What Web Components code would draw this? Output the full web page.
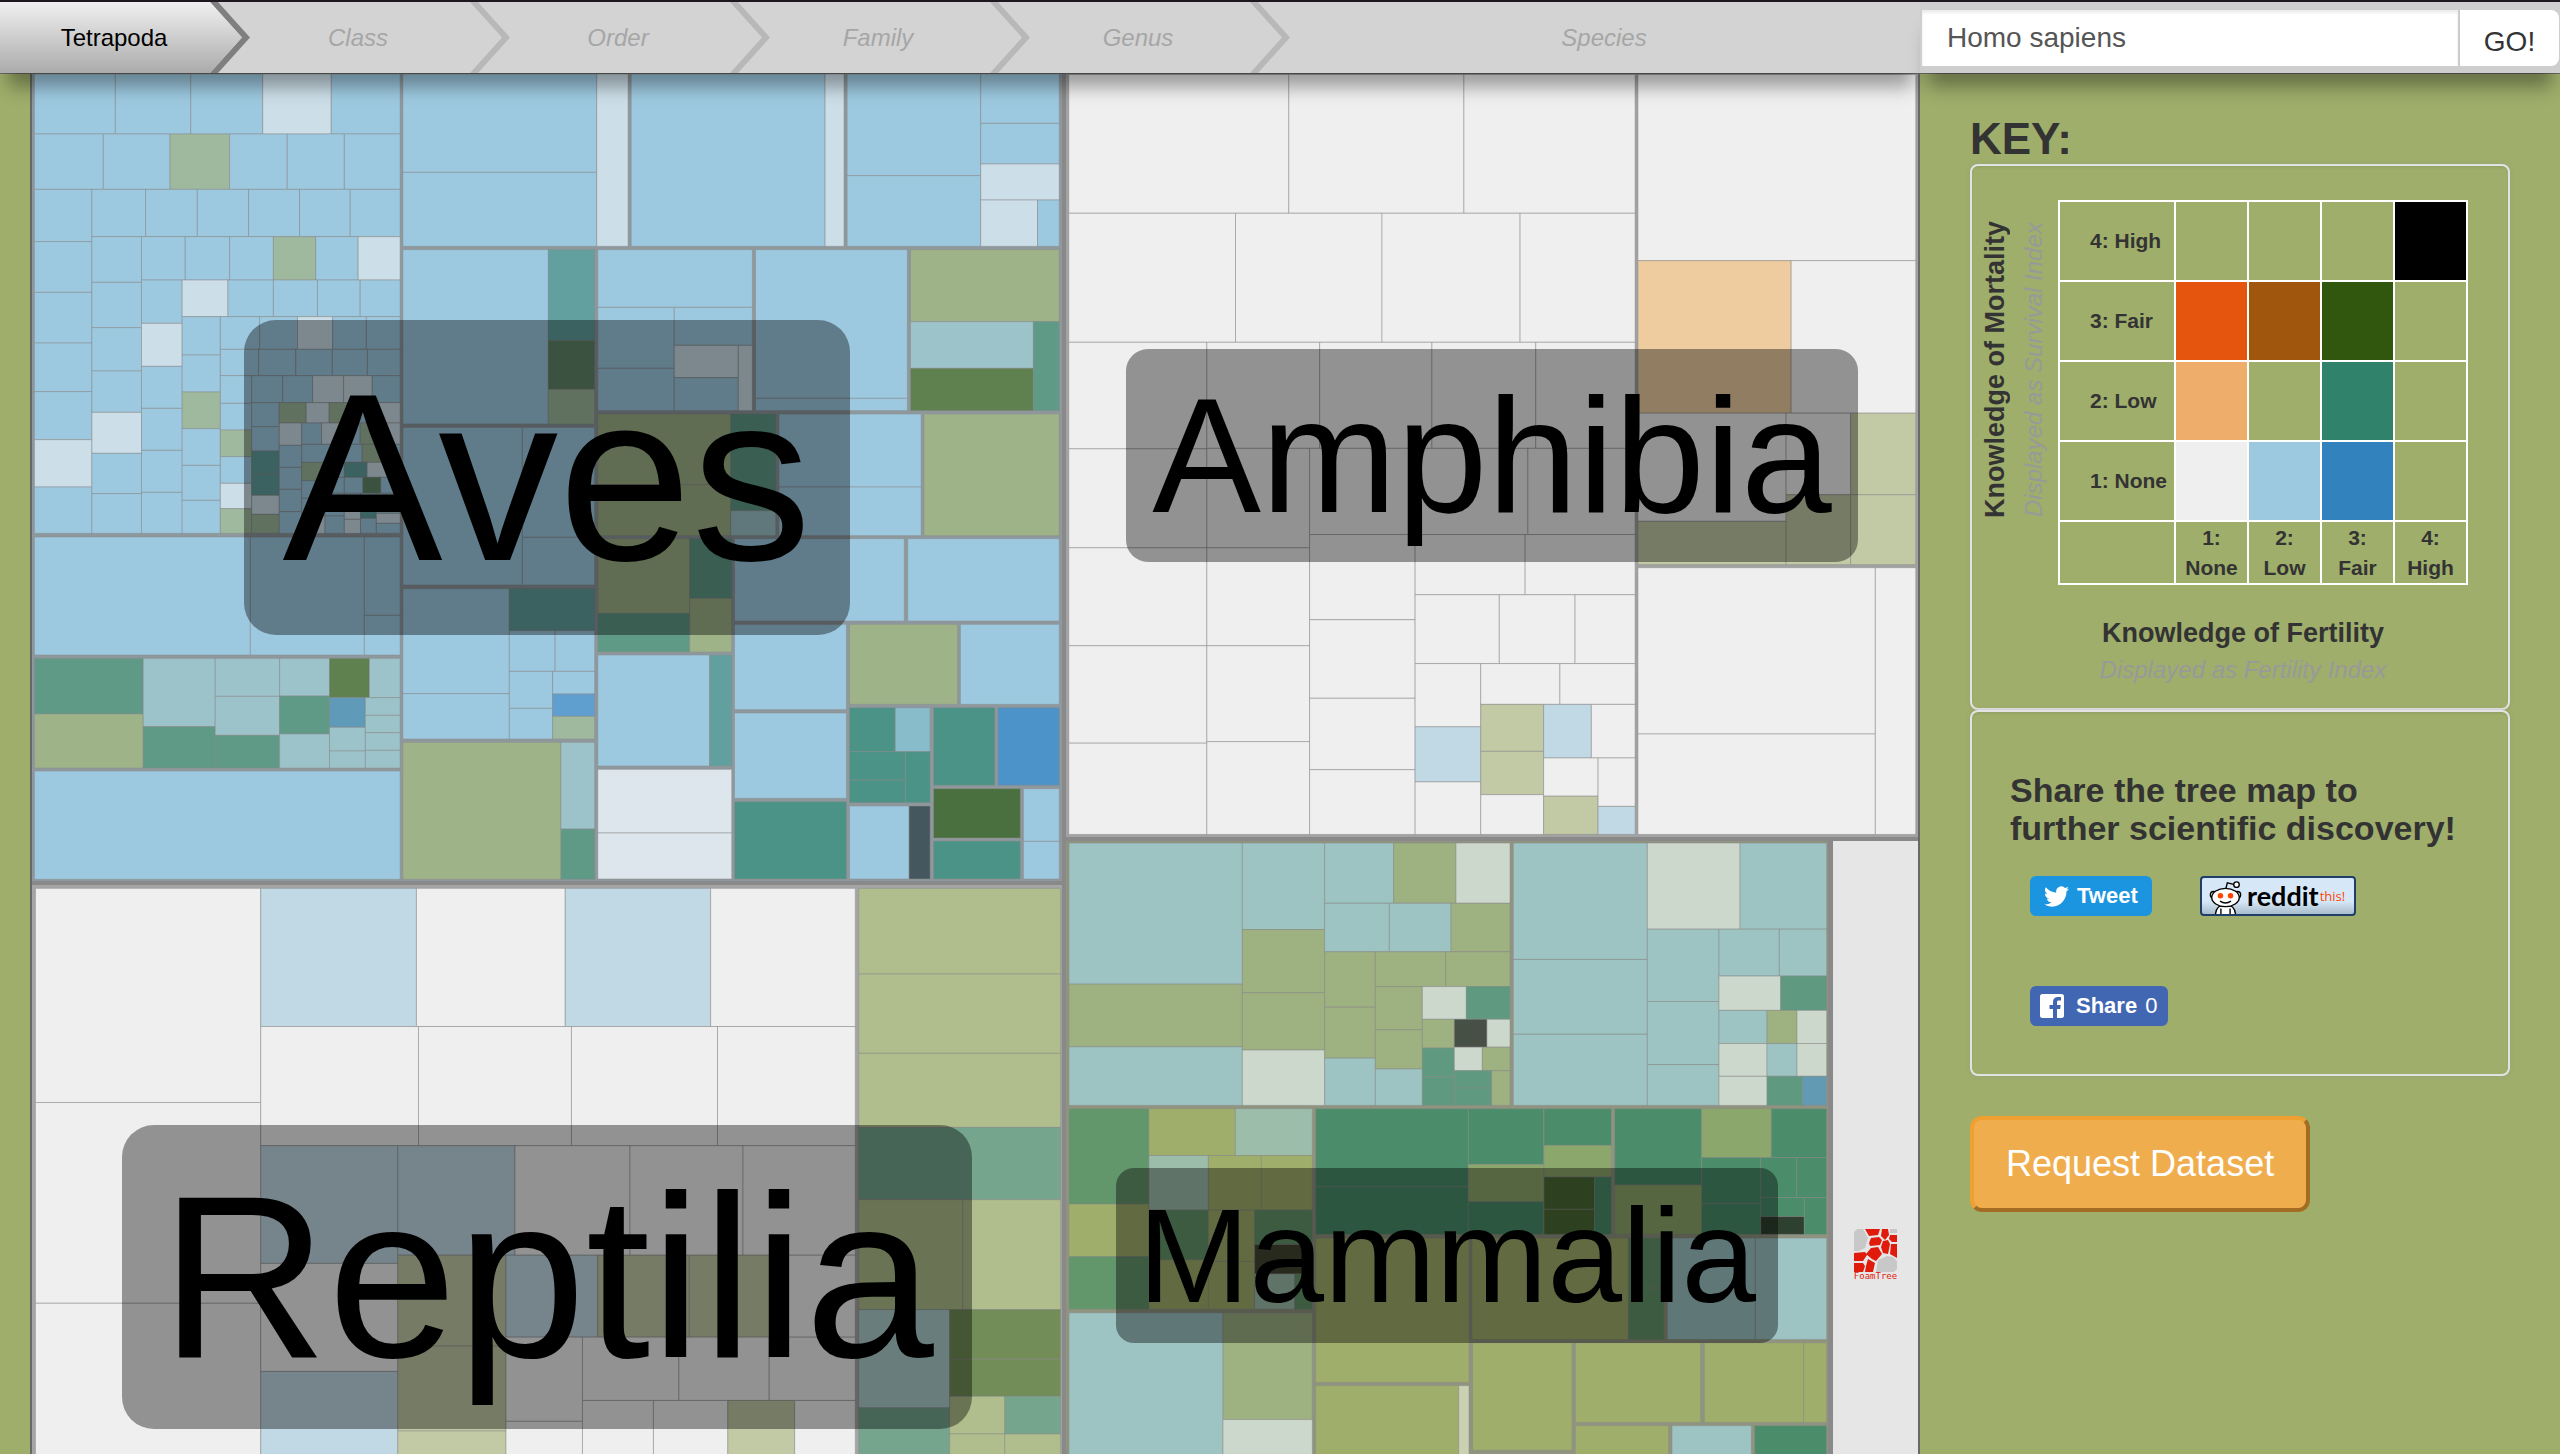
<!DOCTYPE html>
<html lang="en">
<head>
<meta charset="utf-8">
<title>Tetrapoda tree map</title>
<style>
  html, body { margin: 0; height: 100%; overflow: hidden; }
  body { background: #9fae6b; color: #333; font-family: "Liberation Sans", Arial, sans-serif; }
</style>
</head>
<body>
<demography-page></demography-page>

<script>
const PALETTE = {
  b: '#9dc9e0', p: '#ccdee8', g: '#9eb99e', t: '#61a09f', s: '#9dc3ca', G: '#9eb388', d: '#5f9a87',
  D: '#5f8150', w: '#dce6ec', q: '#4b9386', B: '#4c93c9', k: '#44575e', u: '#5f9fd0', e: '#5f9ab8',
  E: '#4a703f', h: '#88bccb', f: '#618769', n: '#efefef', l: '#c1d8e5', o: '#eecc9f', y: '#c2c9a5',
  r: '#b0bd8c', T: '#75a58d', F: '#728d58', z: '#adcdcd', m: '#9dc3c3', v: '#9db181', c: '#cdd8cc',
  i: '#5f9a80', j: '#465045', A: '#62966b', O: '#9fae6a', a: '#9dbdab', Q: '#4b8d6a', R: '#8ba76b',
  X: '#4a6b36', Y: '#444632', x: '#629ab3', K: '#2e402f', C: '#c9d1b0'
};

/* Each run is "H top bottom x colour x colour x" or "V left right y colour y colour y".
   A "-" in place of a colour leaves a gap. "@ dx dy" moves the origin of the runs after it. */
const TAXA = {
  aves: { box: '35 42 2991 2421', line: '#8e989d', runs: `
H 42 222 42 b 277 b 496 b 705 p 904 b 1104
H 222 388 42 b 242 b 436 g 609 b 776 b 942 b 1104
V 42 209 388 b 545 b 697 b 849 b 995 b 1139 p 1281 b 1420
H 388 530 209 b 365 b 515 b 664 b 812 b 959 b 1104
V 209 353 530 b 667 b 803 b 933 b 1057 p 1180 b 1301 b 1420
H 530 660 353 b 480 b 609 b 736 g 859 b 982 p 1104
V 353 471 660 b 790 p 919 b 1045 b 1171 b 1297 b 1420
H 660 770 471 p 604 b 736 b 864 b 988 b 1104
V 471 582 770 b 885 b 996 g 1106 b 1216 b 1321 b 1420
H 770 868 582 b 696 b 806 p 908 b 1006 b 1104
H 868 947 582 b 693 b 801 b 907 b 1009 b 1104
V 582 673 947 b 1030 b 1110 g 1190 b 1270 p 1346 g 1420
H 947 1028 673 b 763 b 850 p 940 p 1023 b 1104
V 673 753 1028 b 1100 b 1173 t 1243 t 1306 p 1363 g 1420
H 1028 1089 753 g 831 p 898 g 960 b 1030 p 1104
V 753 818 1089 p 1156 b 1222 b 1288 b 1355 b 1420
H 1089 1153 818 b 876 p 940 b 988 g 1045 p 1104
H 1153 1207 818 b 905 b 994 g 1050 b 1104
V 818 886 1207 g 1262 b 1315 b 1368 p 1420
H 1207 1252 886 b 942 t 1008 p 1104
H 1252 1300 886 b 942 b 996 f 1048 b 1104
V 886 942 1300 b 1368 b 1420
V 942 989 1300 b 1340 p 1378 p 1420
V 989 1035 1300 b 1340 t 1375 b 1420
V 1035 1104 1300 b 1360 p 1390 b 1420
V 1112 1675 42 b 337 b 559
H 42 559 1675 p 1766
H 569 1092 1112 b 1535
H 1102 1575 1112 b 1459
V 1459 1669 1102 b 1432 b 1575
@ 0 1380
H 51 405 42 b 669 b 1000
V 1000 1104 51 b 286 b 405
V 42 358 415 d 582 G 744
V 358 567 415 s 620 d 744
V 567 754 415 s 529 s 646 d 744
V 754 899 415 s 528 d 642 s 744
H 415 533 899 D 1015 s 1104
V 899 1003 533 e 622 s 693 s 744
V 1003 1104 533 s 586 s 638 s 691 s 744
H 753 1078 42 b 1104
V 1112 1421 206 b 521 b 657
H 206 332 1421 t 1669
H 332 454 1421 b 1554 b 1669
V 1421 1547 454 b 565 b 657
V 1547 1669 454 b 522 u 589 g 657
V 1112 1571 667 G 1078
V 1571 1669 667 s 927 d 1078
@ 1510 0
H 42 559 265 b 828 p 883
V 892 1280 42 b 347 b 559
V 1280 1508 42 b 190 b 312 p 420
H 420 559 1280 p 1445 b 1508
V 24 159 569 t 842 f 988 g 1092
H 569 742 168 b 617
V 168 390 742 b 925 b 1052
H 742 856 390 b 617
V 390 576 856 p 953 b 1052
V 576 617 856 p 1052
V 626 1067 569 b 1015 b 1052
H 569 785 1076 G 1508
V 1076 1433 785 s 925 D 1052
V 1433 1508 785 d 1052
V 168 554 1062 G 1274 G 1427
V 554 685 1062 d 1352 s 1427
V 694 1107 1062 b 1281 b 1427
V 1115 1508 1062 G 1427
@ 1510 1380
V 168 435 56 G 280 d 396
V 435 557 56 d 235 G 396
H 405 738 168 b 493 t 557
V 168 557 748 w 939 w 1077
H 56 303 565 b 1058 - 1068 b 1508
V 565 890 313 b 569 - 579 b 835 - 845 q 1077
H 313 553 899 G 1213 - 1221 b 1508
H 563 695 899 q 1032 h 1133
V 899 1061 695 q 780 q 848
V 1061 1133 695 q 848
H 858 1077 899 b 1072 k 1133
H 563 796 1143 q 1321 - 1330 B 1508
V 1143 1395 806 E 954 - 963 q 1077
V 1404 1508 806 b 964 b 1077` },

  amphibia: { box: '28 27 1518 1496', line: '#a2a2a2', runs: `
H 28 300 33 n 425 n 737 n 1042
H 300 553 33 n 330 n 591 n 837 n 1042
V 33 279 553 n 762 n 956 n 1148 n 1339 n 1518
H 553 761 279 n 480 n 680 n 865 n 1042
V 279 462 761 n 956 n 1148 n 1336 n 1518
H 761 930 462 n 655 n 851 n 1042
V 462 650 930 n 1097 n 1251 n 1391 n 1518
H 930 1048 650 n 846 n 1042
H 1048 1183 650 n 800 n 935 n 1042
V 650 767 1183 n 1307 l 1415 n 1518
H 1183 1263 767 n 908 n 1042
V 767 879 1263 y 1355 y 1440 n 1518
H 1263 1368 879 l 964 n 1042
V 879 976 1368 n 1443 y 1518
V 976 1042 1368 n 1463 l 1518
H 28 393 1047 n 1542
H 393 692 1047 o 1320 n 1542
V 1047 1311 692 n 904 y 989
V 1311 1426 692 n 852 y 989
V 1426 1542 692 y 852 y 989
V 1047 1470 995 n 1321 n 1518
V 1470 1542 995 n 1518` },

  reptilia: { box: '46 40 1495 2105', line: '#a5a5a5', runs: `
V 51 378 49 n 624 n 1163 n 2140
H 49 420 378 l 604 n 820 l 1031 n 1241
H 420 740 378 n 607 n 829 n 1041 n 1241
V 378 577 740 l 1056 n 1346 l 2140
H 740 1034 577 l 747 n 914 n 1078 n 1241
V 577 734 1034 y 1278 y 1506 y 2140
H 1034 1254 734 l 867 y 1000 y 1117 n 1241
V 734 845 1254 n 1480 n 2140
H 1254 1424 845 n 985 n 1116 n 1241
H 1424 2140 845 n 948 n 1056 y 1153 n 1241
V 1246 1539 49 r 279 r 492 r 691 T 885
H 885 1180 1246 r 1397 r 1539
V 1246 1378 1180 z 1444 T 2140
V 1378 1539 1180 F 1313 F 1413
H 1413 1514 1378 r 1458 T 1539
H 1514 2140 1378 r 1458 r 1539` },

  mammalia: { box: '48 52 2286 2048', line: '#90947f', runs: `
V 57 577 57 m 406 v 561 m 706
V 577 824 57 m 271 v 427 v 569 c 706
H 57 206 824 m 1031 v 1218 c 1380
H 206 326 824 m 1018 m 1203 v 1380
V 824 976 326 v 463 v 589 m 706
H 326 412 976 v 1187 v 1380
V 976 1117 412 v 519 v 616 m 706
H 412 493 1117 c 1249 i 1380
V 1117 1213 493 v 564 i 635 i 706
H 493 562 1213 j 1311 c 1380
H 562 620 1213 c 1297 v 1380
V 1213 1325 620 i 663 i 706
V 1325 1380 620 v 706
V 57 297 714 A 950 O 1080 A 1210
H 714 830 297 O 556 a 787
H 830 965 297 a 475 O 634 O 787
V 297 475 965 A 1088 O 1210
V 475 614 965 O 1092 O 1210
V 614 787 965 A 1050 Y 1123
H 1123 1210 614 a 734 A 787
V 57 519 1219 m 2095
V 519 787 1219 v 1483 c 2095
V 797 1255 714 Q 907 Q 1025
V 1255 1481 714 Q 852 R 944 Q 1025
H 1034 1391 797 O 1257
H 1034 1285 1266 O 1735
V 1735 1842 1034 A 1158 A 1285
H 1399 2095 797 O 1226 C 1257
V 1268 1566 1293 O 1559 - 1567 O 2095
@ 1290 0
V 100 502 57 m 345 m 530 m 706
H 57 270 502 c 780 m 1040
V 502 717 270 m 449 m 605 m 706
H 270 386 717 m 898 m 1040
H 386 471 717 c 902 i 1040
V 717 861 471 m 553 c 634 c 706
V 861 951 471 v 553 m 634
V 951 1040 471 c 553 c 634
H 634 706 861 i 967 x 1040
V 192 394 714 Q 805 R 883
V 192 344 883 X 963 X 1025
V 344 394 883 Q 1025
V 404 665 714 Q 903 R 1025
H 714 835 665 R 874 Q 1040
V 665 842 835 Q 948 Q 1025
H 835 934 842 Q 950 Q 1040
V 842 973 934 Q 981 K 1025
V 973 1040 934 Q 1025
H 1034 1285 562 m 826 m 1040
H 1293 1490 286 O 662 - 673 O 971 O 1040
H 1498 2095 286 O 566 - 576 m 814 - 824 Q 1040` }
};

function drawCells(runs) {
  let dx = 0, dy = 0, out = '';
  for (const row of runs.trim().split('\n')) {
    const t = row.trim().split(/\s+/);
    if (t[0] === '@') { dx = +t[1]; dy = +t[2]; continue; }
    for (let i = 3; i + 2 < t.length; i += 2) {
      if (t[i + 1] === '-') continue;
      const a = +t[i], z = +t[i + 2], p = +t[1], q = +t[2];
      const [x, y, w, h] = t[0] === 'H' ? [a, p, z - a, q - p] : [p, a, q - p, z - a];
      out += `<rect x="${x + dx}" y="${y + dy}" width="${w}" height="${h}" fill="${PALETTE[t[i + 1]]}"/>`;
    }
  }
  return out;
}

function define(name, html) {
  const template = document.createElement('template');
  template.innerHTML = html;
  customElements.define(name, class extends HTMLElement {
    constructor() {
      super();
      this.attachShadow({ mode: 'open' }).append(template.content.cloneNode(true));
    }
  });
}

class TaxonTile extends HTMLElement {
  connectedCallback() {
    const taxon = TAXA[this.getAttribute('taxon')];
    const root = this.shadowRoot || this.attachShadow({ mode: 'open' });
    root.innerHTML = `
      <style>
        :host { display: grid; grid-template: minmax(0, 1fr) / minmax(0, 1fr); min-width: 0; min-height: 0; }
        svg { grid-area: 1 / 1; width: 100%; height: 100%; display: block; background: ${taxon.line}; }
        rect { stroke: #8c8c8c; stroke-opacity: .5; vector-effect: non-scaling-stroke; }
        .label { grid-area: 1 / 1; place-self: center; position: relative; color: #000;
          background: rgba(0, 0, 0, .39); font-size: var(--size); line-height: var(--tall);
          padding: 0 var(--pad); border-radius: var(--round); white-space: nowrap; }
      </style>
      <svg viewBox="${taxon.box}" preserveAspectRatio="none" aria-hidden="true">${drawCells(taxon.runs)}</svg>
      <span class="label"><slot></slot></span>`;
  }
}
customElements.define('taxon-tile', TaxonTile);

define('foamtree-credit', `
  <style>
    :host { display: flex; flex-direction: column; align-items: center; justify-content: center; background: #e6e6e6; overflow: hidden; }
    svg { display: block; }
    span { font: 9px/9px "DejaVu Sans Mono", monospace; color: #e01b0c; }
  </style>
  <svg width="43" height="43" viewBox="0 0 43 43" aria-hidden="true">
    <path fill="#c8c8c8" d="M3 0h6l5 9-3 10-6 3H0V3zM36 0h7v4h-7zM24 31l9-4 6 1 4 4v8l-3 3H22z"/>
    <g fill="#e01b0c">
      <path d="M11 0h15l-2 6-9 1zM28 0h6l1 6-4 5-4-4zM36 6h7v7h-5l-3-3zM17 9l8-1 3 3-2 5-10 1-1-3zM29 12l5-1 2 4-2 10-5-1-2-6zM37 15h6v14l-7-4zM17 19l7-1 4 7-6 7-4-2-6-5zM0 24l11-1 2 3-4 6H0zM0 34h9l2 3-2 6H0zM14 30l7 4-2 9h-8l1-6z"/>
    </g>
  </svg>
  <span>FoamTree</span>`);

define('tree-map', `
  <style>
    :host { display: flex; gap: 4px; box-sizing: border-box; aspect-ratio: 1890 / 1595; background: #898989;
      border: solid #686868; border-width: 0 2px; }
    .column, .row { display: flex; min-width: 0; min-height: 0; }
    .column { flex-direction: column; gap: 4px; }
    .row { gap: 5px; }
    .left { flex: 1030 0 0; } .right { flex: 852 0 0; }
    .aves { flex: 807 0 0; --size: 240px; --tall: 315px; --pad: 38px; --round: 32px; }
    .reptilia { flex: 784 0 0; --size: 232px; --tall: 304px; --pad: 38px; --round: 32px; }
    .amphibia { flex: 763 0 0; --size: 163px; --tall: 213px; --pad: 26px; --round: 22px; }
    .row { flex: 828 0 0; }
    .mammalia { flex: 762 0 0; --size: 134px; --tall: 175px; --pad: 22px; --round: 18px; }
    foamtree-credit { flex: 85 0 0; }
  </style>
  <div class="column left">
    <taxon-tile class="aves" taxon="aves">Aves</taxon-tile>
    <taxon-tile class="reptilia" taxon="reptilia">Reptilia</taxon-tile>
  </div>
  <div class="column right">
    <taxon-tile class="amphibia" taxon="amphibia">Amphibia</taxon-tile>
    <div class="row">
      <taxon-tile class="mammalia" taxon="mammalia">Mammalia</taxon-tile>
      <foamtree-credit></foamtree-credit>
    </div>
  </div>`);

define('taxa-trail', `
  <style>
    :host { display: block; background: #d3d3d3; box-shadow: 0 22px 18px -8px rgba(0, 0, 0, .35); }
    ol { list-style: none; margin: 0; padding: 0; display: flex; height: 100%; }
    li { position: relative; flex: 0 0 260px; display: flex; align-items: center; justify-content: center;
      font-size: 24px; line-height: 28px; font-style: italic; color: #a6a6a6; }
    li:first-child { flex-basis: 228px; font-style: normal; }
    li:last-child { flex: 1; padding-left: 20px; }
    li:not(:last-child)::before { content: ""; position: absolute; inset: 0 -22px 0 0; background: #b8b8b8;
      clip-path: polygon(calc(100% - 40px) 0, calc(100% - 32px) 0, 100% 50%, calc(100% - 32px) 100%, calc(100% - 40px) 100%, calc(100% - 8px) 50%); }
    li:first-child:not(:last-child)::before { background: #7f7f7f; }
    li:first-child::after { content: ""; position: absolute; inset: 0 -14px 0 0; background: linear-gradient(#f0f0f0, #ababab);
      clip-path: polygon(0 0, calc(100% - 32px) 0, 100% 50%, calc(100% - 32px) 100%, 0 100%); }
    a { position: relative; z-index: 1; color: #000; text-decoration: none; }
  </style>
  <ol>
    <li><a href="#tetrapoda">Tetrapoda</a></li>
    <li>Class</li><li>Order</li><li>Family</li><li>Genus</li><li>Species</li>
  </ol>`);

define('species-search', `
  <style>
    :host { display: block; background: #cecece; box-shadow: 0 22px 18px -8px rgba(0, 0, 0, .35); }
    form { display: flex; height: 100%; box-sizing: border-box; padding: 8px 1px 7px 2px; }
    input, button { font: 28px/32px "Liberation Sans", Arial, sans-serif; border: 0; margin: 0; background: #fff; box-sizing: border-box; }
    input { flex: 1; min-width: 0; padding: 0 25px; color: #555; box-shadow: inset 0 3px 3px rgba(0, 0, 0, .08); outline: 0; }
    button { width: 101px; color: #333; border-left: 2px solid #ccc; border-radius: 0 8px 8px 0; padding: 8px 0 0; }
  </style>
  <form onsubmit="return false">
    <input type="text" aria-label="Species name" value="Homo sapiens">
    <button type="submit">GO!</button>
  </form>`);

define('side-panel', `
  <style>
    :host { display: block; box-sizing: border-box; border: 2px solid #e3e3e3; border-radius: 8px;
      box-shadow: 0 0 4px rgba(140, 140, 140, .4), inset 0 2px 2px rgba(0, 0, 0, .05); }
  </style>
  <slot></slot>`);

define('knowledge-key', `
  <style>
    :host { display: block; }
    .chart { display: flex; gap: 9px; padding: 34px 40px 0 8px; }
    .axis { font-size: 27px; line-height: 30px; font-weight: bold; text-align: center; margin: 0; }
    .note { font-size: 24px; line-height: 30px; font-style: italic; color: #999; text-align: center; margin: 0; }
    .upright { flex: none; writing-mode: vertical-rl; transform: rotate(180deg); height: 340px; white-space: nowrap; }
    .grid { flex: 1; min-width: 0; }
    table { width: 100%; border-collapse: collapse; table-layout: fixed; font-size: 21px; line-height: 30px; }
    th, td { border: 2px solid #fff; padding: 0; height: 78px; }
    .names { width: 116px; }
    tbody th { text-align: left; padding-left: 30px; white-space: nowrap; }
    tfoot th, tfoot td { height: 61px; }
    .below { padding: 33px 0 23px 6px; display: grid; gap: 7px; }
  </style>
  <div class="chart">
    <p class="axis upright">Knowledge of Mortality</p>
    <p class="note upright">Displayed as Survival Index</p>
    <div class="grid"><table>
      <colgroup><col class="names"><col><col><col><col></colgroup>
      <tbody>
        <tr><th scope="row">4: High</th><td></td><td></td><td></td><td style="background:#000"></td></tr>
        <tr><th scope="row">3: Fair</th><td style="background:#e6550d"></td><td style="background:#a0560d"></td><td style="background:#31560d"></td><td></td></tr>
        <tr><th scope="row">2: Low</th><td style="background:#eead6a"></td><td></td><td style="background:#31826a"></td><td></td></tr>
        <tr><th scope="row">1: None</th><td style="background:#efefef"></td><td style="background:#9dc9e0"></td><td style="background:#3182bd"></td><td></td></tr>
      </tbody>
      <tfoot>
        <tr><td></td><th scope="col">1:<br>None</th><th scope="col">2:<br>Low</th><th scope="col">3:<br>Fair</th><th scope="col">4:<br>High</th></tr>
      </tfoot>
    </table></div>
  </div>
  <div class="below">
    <p class="axis">Knowledge of Fertility</p>
    <p class="note">Displayed as Fertility Index</p>
  </div>`);

define('share-links', `
  <style>
    :host { display: block; padding: 59px 38px 48px; }
    h3 { margin: 0 0 29px; font-size: 34px; line-height: 38px; }
    .links { display: flex; flex-wrap: wrap; gap: 70px 48px; padding-left: 20px; }
    a { display: flex; align-items: center; box-sizing: border-box; height: 40px; border-radius: 6px;
      font-size: 22px; line-height: 26px; font-weight: bold; color: #fff; text-decoration: none; }
    .tweet { width: 122px; padding-left: 14px; gap: 8px; background: #1b95e0; }
    .reddit { width: 156px; padding-left: 7px; gap: 5px; border: 2px solid #1f3f68; border-radius: 4px; color: #000;
      background: linear-gradient(#d6e8f8 65%, #a9bccc); font: 700 27px/30px Lato, sans-serif; }
    .reddit svg { align-self: flex-end; }
    .reddit small { font: 13px/16px "Open Sans", sans-serif; color: #ff4500; margin-left: -4px; }
    .facebook { width: 138px; padding-left: 10px; gap: 12px; background: #4267b2; }
    .count { font-weight: normal; margin-left: -4px; }
    svg { display: block; flex: none; }
  </style>
  <h3>Share the tree map to further scientific discovery!</h3>
  <div class="links">
    <a class="tweet" href="#tweet">
      <svg width="25" height="25" viewBox="0 0 24 24" fill="#fff" aria-hidden="true"><path d="M23.95 4.57a10 10 0 0 1-2.82.77 4.96 4.96 0 0 0 2.16-2.72c-.95.55-2 .95-3.13 1.18a4.92 4.92 0 0 0-8.38 4.48C7.69 8.1 4.07 6.13 1.64 3.16a4.92 4.92 0 0 0 1.52 6.57 4.9 4.9 0 0 1-2.23-.61v.06a4.92 4.92 0 0 0 3.95 4.83 5 5 0 0 1-2.21.08 4.94 4.94 0 0 0 4.6 3.42A9.87 9.87 0 0 1 0 19.54a14 14 0 0 0 7.55 2.21c9.05 0 14-7.5 14-13.98 0-.21 0-.42-.02-.63a9.94 9.94 0 0 0 2.42-2.57z"/></svg>
      <span>Tweet</span>
    </a>
    <a class="reddit" href="#reddit">
      <svg width="33" height="33" viewBox="0 0 36 36" fill="#fff" stroke="#000" stroke-width="2" aria-hidden="true">
        <path d="M7 38c0-8 3-12 11-12s11 4 11 12" stroke-width="1.500"/>
        <path d="M13 36v-6M23 36v-6" fill="none" stroke-width="1.500"/>
        <circle cx="5" cy="15" r="3.500" stroke-width="1.500"/><circle cx="31" cy="15" r="3.500" stroke-width="1.500"/>
        <path d="M18 10l2-8 8 2" fill="none" stroke-width="1.500"/><circle cx="30" cy="4" r="3" stroke-width="1.500"/>
        <ellipse cx="18" cy="18" rx="15" ry="10" stroke-width="1.500"/>
        <g fill="#ff4500" stroke="none"><circle cx="12.500" cy="16" r="3"/><circle cx="23.500" cy="16" r="3"/></g>
        <path d="M12 22q6 4 12 0" fill="none" stroke-width="1.500"/>
      </svg>
      <span>reddit</span><small>this!</small>
    </a>
    <a class="facebook" href="#facebook">
      <svg width="24" height="24" viewBox="0 0 24 24" fill="#fff" aria-hidden="true"><path d="M2.500 0h19A2.500 2.500 0 0 1 24 2.500v19a2.500 2.500 0 0 1-2.500 2.500H17v-9h3.200l.5-4H17V8.300c0-1.200.5-1.800 1.900-1.800H21V3.100C20.500 3 19.400 3 18.200 3 15 3 13 4.800 13 8v3H9.500v4H13v9H2.500A2.500 2.500 0 0 1 0 21.500v-19A2.500 2.500 0 0 1 2.500 0z"/></svg>
      <span>Share</span><span class="count">0</span>
    </a>
  </div>`);

define('demography-page', `
  <style>
    :host { display: flex; flex-direction: column; height: 100vh; overflow: hidden; }
    header { position: relative; z-index: 2; flex: none; display: flex; box-sizing: border-box; height: 74px;
      border-top: 2px solid #1c181e; border-bottom: 1px solid #6c6c6c; }
    taxa-trail { width: 75%; } species-search { width: 25%; }
    main { flex: 1; min-height: 0; overflow: hidden; display: flex; align-items: flex-start; }
    .map { width: 75%; box-sizing: border-box; padding-left: 30px; }
    aside { width: 25%; box-sizing: border-box; padding: 40px 50px 0; }
    h2 { margin: 0; font-size: 44px; line-height: 50px; }
    button { margin: 40px 0 0; height: 96px; padding: 0 32px; font: 36px/44px "Liberation Sans", Arial, sans-serif; color: #fff;
      background: #f0ad4e; border: 4px solid; border-color: #f0a030 #a26c22 #a26c22 #f0a030; border-radius: 12px; }
  </style>
  <header>
    <taxa-trail role="navigation" aria-label="Taxonomic rank"></taxa-trail>
    <species-search></species-search>
  </header>
  <main>
    <div class="map"><tree-map></tree-map></div>
    <aside>
      <h2>KEY:</h2>
      <side-panel><knowledge-key></knowledge-key></side-panel>
      <side-panel><share-links></share-links></side-panel>
      <button type="button">Request Dataset</button>
    </aside>
  </main>`);
</script>
</body>
</html>
